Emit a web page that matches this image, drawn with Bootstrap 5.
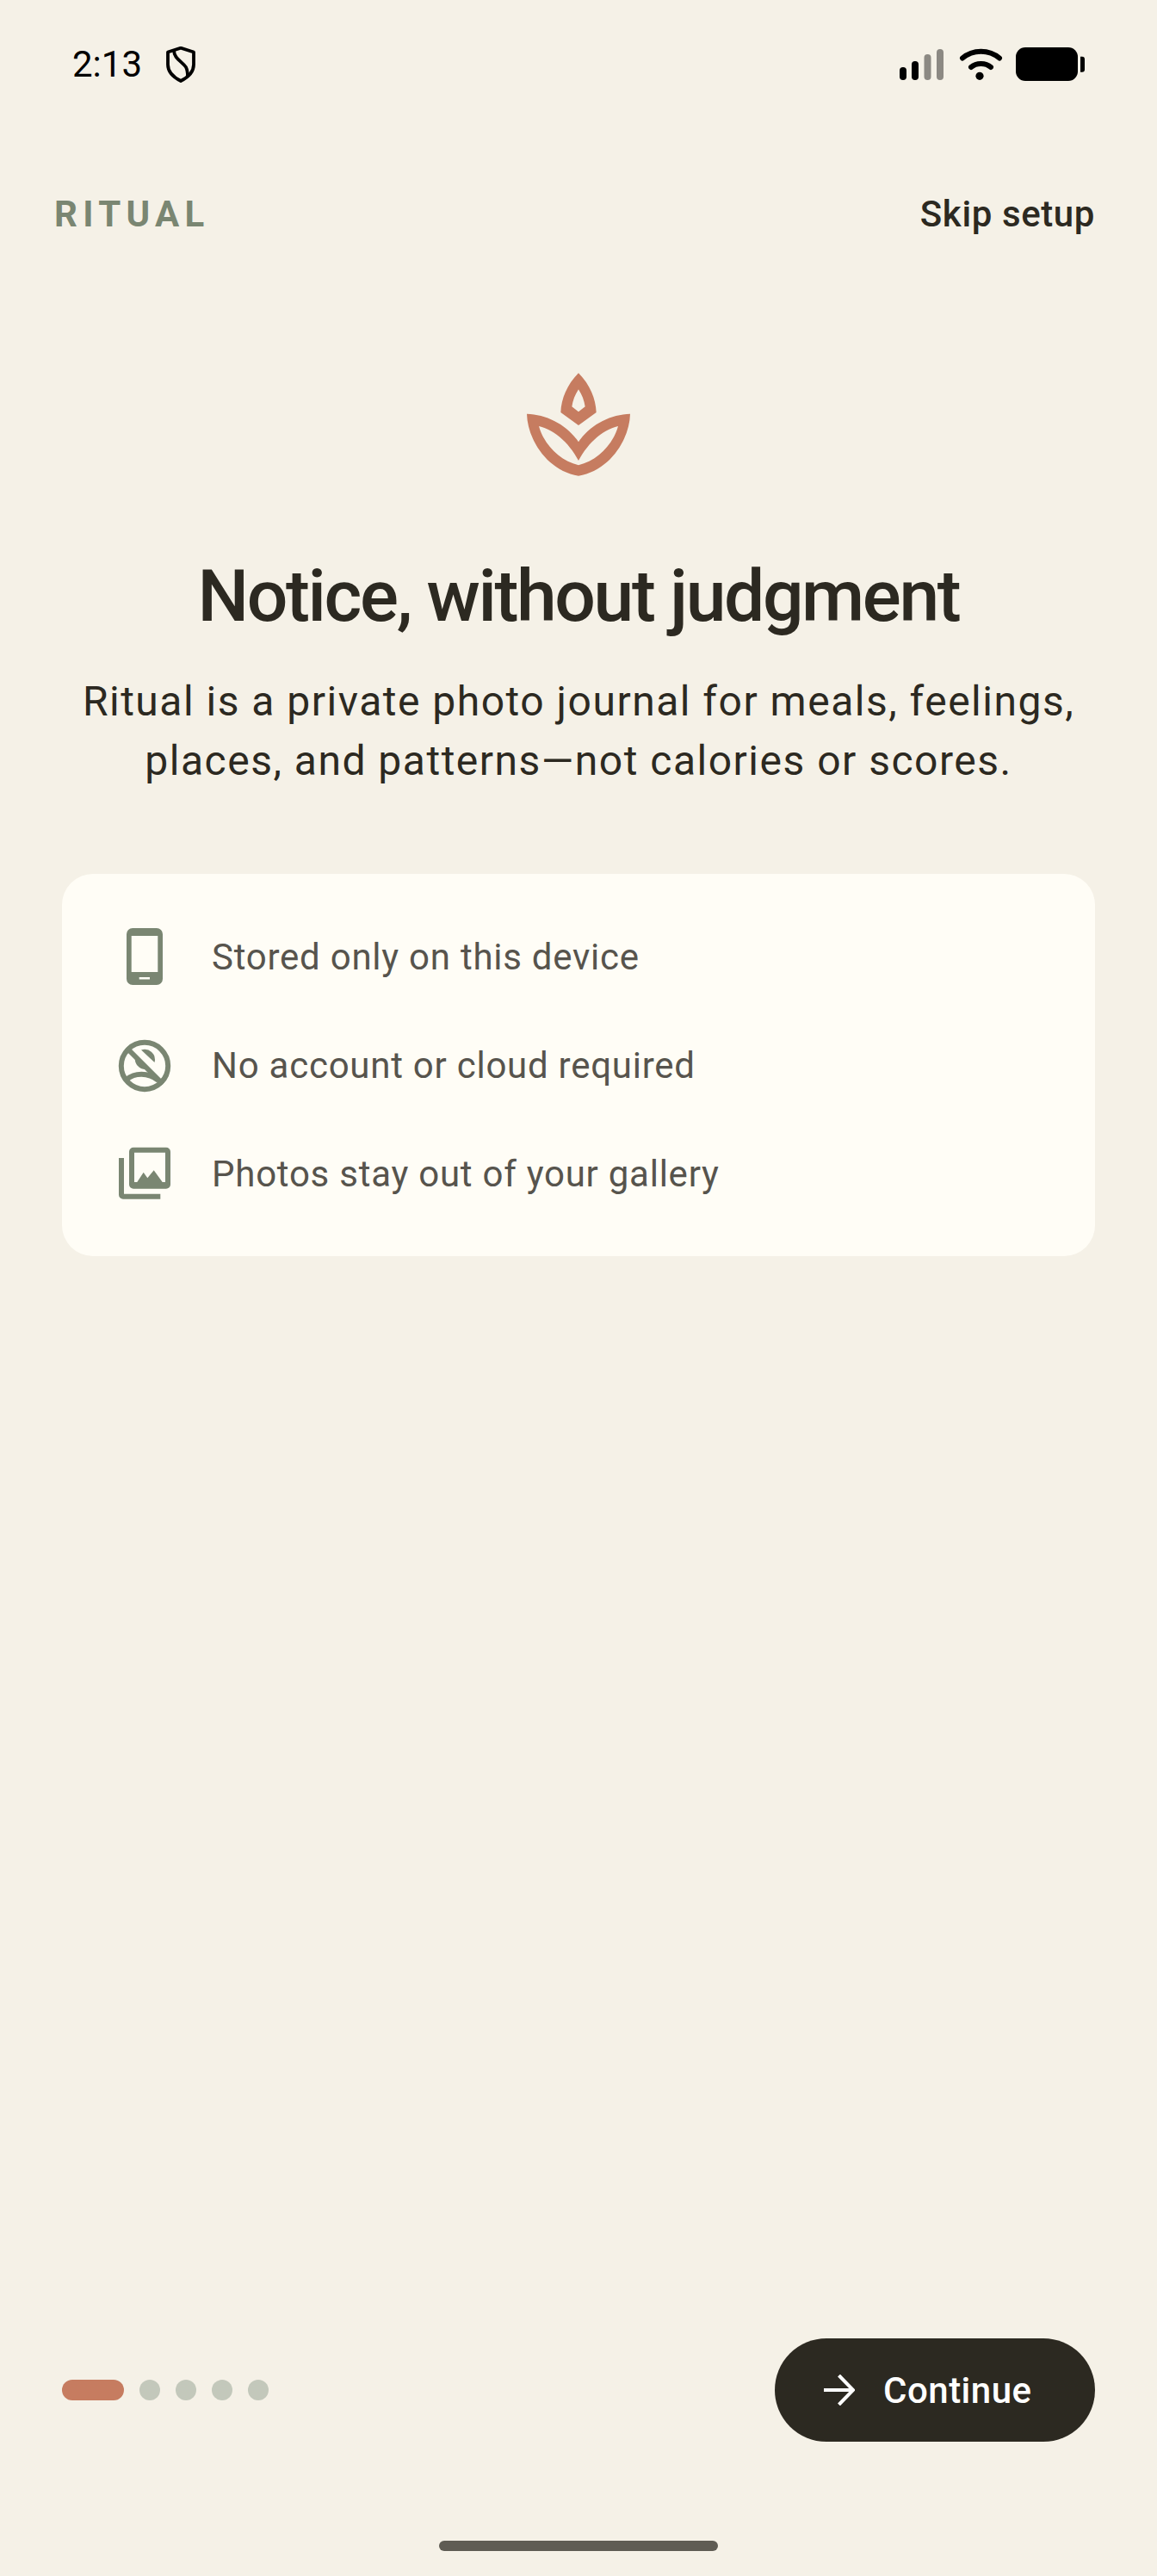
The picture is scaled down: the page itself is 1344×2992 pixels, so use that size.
<!DOCTYPE html>
<html lang="en">
<head>
<meta charset="UTF-8">
<meta name="viewport" content="width=device-width, initial-scale=1.0">
<title>Ritual</title>
<link href="https://cdn.jsdelivr.net/npm/bootstrap@5.3.3/dist/css/bootstrap.min.css" rel="stylesheet">
<style>
  body { background: #f5f1e7; font-family: Roboto, "Liberation Sans", sans-serif; color: #2c2921; }
  .screen { height: 2992px; overflow: hidden; }
  .status-bar { height: 150px; padding: 0 84px; color: #000; font-size: 42px; line-height: 1; }
  .status-time { margin-right: 28px; }
  .brand-row { padding: 0 72px 0 63px; height: 96px; margin-top: 50px; }
  .brand-name { font-size: 42px; font-weight: 700; letter-spacing: 6.3px; color: #7a8672; }
  .skip-link { font-size: 42px; font-weight: 500; letter-spacing: 0.6px; color: #2c2921; text-decoration: none; }
  .logo-wrap { margin-top: 114px; height: 160px; }
  .headline { font-size: 84px; font-weight: 500; letter-spacing: -2.4px; line-height: 96px; margin: 75px 0 0; color: #2c2921; }
  .intro { font-size: 48px; line-height: 69px; letter-spacing: 1.5px; margin: 39px 0 0; color: #2c2921; }
  .info-panel { margin: 97px 72px 0; padding: 33px 60px; background: #fffdf6; border-radius: 36px; }
  .info-row { height: 126px; gap: 42px; font-size: 42px; letter-spacing: 0.75px; color: #57544d; }
  .info-icon { width: 72px; height: 72px; flex: none; }
  .bottom-row { padding: 0 72px; margin-top: auto; }
  .step-row { gap: 18px; }
  .step-on { width: 72px; height: 24px; border-radius: 12px; background: #c67c60; }
  .step-off { width: 24px; height: 24px; border-radius: 50%; background: #c3c8bb; }
  .continue-btn { width: 372px; height: 120px; border-radius: 60px; background: #2c2921; color: #fff; font-size: 42px; font-weight: 500; letter-spacing: 0.5px; border: 0; gap: 33px; padding: 0 0 0 57px; }
  .continue-btn:hover { background: #2c2921; color: #fff; }
  .home-wrap { height: 156px; padding-top: 115px; }
  .home-bar { width: 324px; height: 12px; border-radius: 6px; background: #5f5c54; margin: 0 auto; }
</style>
</head>
<body>
<div class="screen d-flex flex-column">
  <div class="status-bar d-flex align-items-center justify-content-between">
    <div class="d-flex align-items-center">
      <span class="status-time">2:13</span>
      <svg width="34" height="42" viewBox="0 0 34 42" fill="none" stroke="#000" stroke-width="3.8" stroke-linejoin="round">
        <path d="M17 1.7 L32 6.5 V21 C32 30 25 36 17 40 C9 36 2 30 2 21 V6.5 Z"/>
        <path d="M9 4 C9 14 18 17 23 24 C25 28 25 32 25 35"/>
      </svg>
    </div>
    <svg width="215" height="40" viewBox="0 0 215 40">
      <rect x="0" y="23" width="8" height="15" rx="4" fill="#000"/>
      <rect x="14" y="16" width="8" height="22" rx="4" fill="#000"/>
      <rect x="28.5" y="8" width="8" height="30" rx="4" fill="#8c8983"/>
      <rect x="43" y="2" width="8" height="36" rx="4" fill="#8c8983"/>
      <path d="M73 12.5 C85 2 104 2 116 12.5" fill="none" stroke="#000" stroke-width="6" stroke-linecap="round"/>
      <path d="M83 23 C89 17.5 100 17.5 106 23" fill="none" stroke="#000" stroke-width="6" stroke-linecap="round"/>
      <circle cx="93" cy="33.3" r="4.6" fill="#000"/>
      <rect x="135" y="0" width="72" height="39" rx="11" fill="#000"/>
      <path d="M210 10.7 h2 a3 3 0 0 1 3 3 v12 a3 3 0 0 1 -3 3 h-2 Z" fill="#000"/>
    </svg>
  </div>

  <div class="brand-row d-flex align-items-center justify-content-between">
    <span class="brand-name">RITUAL</span>
    <a href="#" class="skip-link">Skip setup</a>
  </div>

  <div class="logo-wrap d-flex justify-content-center">
    <svg width="200" height="160" viewBox="0 0 600 480" fill="#c67c60" fill-rule="evenodd">
      <path d="M300 70 C340 110 360 160 362 207 L300 252 L238 207 C240 160 260 110 300 70 Z M300 127 C288 145 280 165 277 187 L300 205 L323 187 C320 165 312 145 300 127 Z"/>
      <path d="M120 212 C190 214 260 250 300 310 C340 250 410 214 480 212 C478 300 410 410 300 428 C190 410 122 300 120 212 Z M162 255 C180 320 235 375 300 391 C365 375 420 320 438 255 C385 268 335 310 300 375 C265 310 215 268 162 255 Z"/>
    </svg>
  </div>

  <div class="text-center">
    <h1 class="headline">Notice, without judgment</h1>
    <p class="intro">Ritual is a private photo journal for meals, feelings,<br>places, and patterns—not calories or scores.</p>
  </div>

  <div class="info-panel">
    <div class="info-row d-flex align-items-center">
      <svg class="info-icon" viewBox="0 0 72 72" fill="#7a8672" fill-rule="evenodd">
        <path d="M22 3 H50 a7 7 0 0 1 7 7 V62 a7 7 0 0 1 -7 7 H22 a7 7 0 0 1 -7 -7 V10 a7 7 0 0 1 7 -7 Z M20.7 12 V54 H51.3 V12 Z M29.7 60 V62.5 H42 V60 Z"/>
      </svg>
      <span>Stored only on this device</span>
    </div>
    <div class="info-row d-flex align-items-center">
      <svg class="info-icon" viewBox="0 0 72 72" fill="none" stroke="#7a8672" stroke-width="6">
        <circle cx="36" cy="37" r="27.2"/>
        <path d="M15 16 L57 58"/>
        <path d="M15 53 C24 45 40 44 52 54"/>
        <path d="M32 18.5 A12 12 0 0 1 47.5 33 Z" fill="#7a8672" stroke="none"/>
        <path d="M25 27 A12 12 0 0 0 37 41 Z" fill="#7a8672" stroke="none"/>
      </svg>
      <span>No account or cloud required</span>
    </div>
    <div class="info-row d-flex align-items-center">
      <svg class="info-icon" viewBox="0 0 72 72" fill="#7a8672" fill-rule="evenodd">
        <path d="M23 5.7 H61 a5 5 0 0 1 5 5 V48.7 a5 5 0 0 1 -5 5 H23 a5 5 0 0 1 -5 -5 V10.7 a5 5 0 0 1 5 -5 Z M24 11.7 V46 H60 V11.7 Z"/>
        <path d="M6 18 H12 V59.7 H54.3 V65.7 H11 a5 5 0 0 1 -5 -5 Z"/>
        <path d="M27.3 46 L34.7 34.7 L39.3 41.3 L46.7 32.3 L56.7 46 Z"/>
      </svg>
      <span>Photos stay out of your gallery</span>
    </div>
  </div>

  <div class="bottom-row d-flex align-items-center justify-content-between">
    <div class="step-row d-flex align-items-center">
      <div class="step-on"></div>
      <div class="step-off"></div>
      <div class="step-off"></div>
      <div class="step-off"></div>
      <div class="step-off"></div>
    </div>
    <button type="button" class="btn continue-btn d-flex align-items-center">
      <svg width="36" height="36" viewBox="0 0 36 36" fill="none" stroke="#fff" stroke-width="4">
        <path d="M0 18 H34 M17.5 1 L34 18 L17.5 35"/>
      </svg>
      <span>Continue</span>
    </button>
  </div>
  <div class="home-wrap"><div class="home-bar"></div></div>
</div>
<script src="https://cdn.jsdelivr.net/npm/bootstrap@5.3.3/dist/js/bootstrap.bundle.min.js"></script>
</body>
</html>
